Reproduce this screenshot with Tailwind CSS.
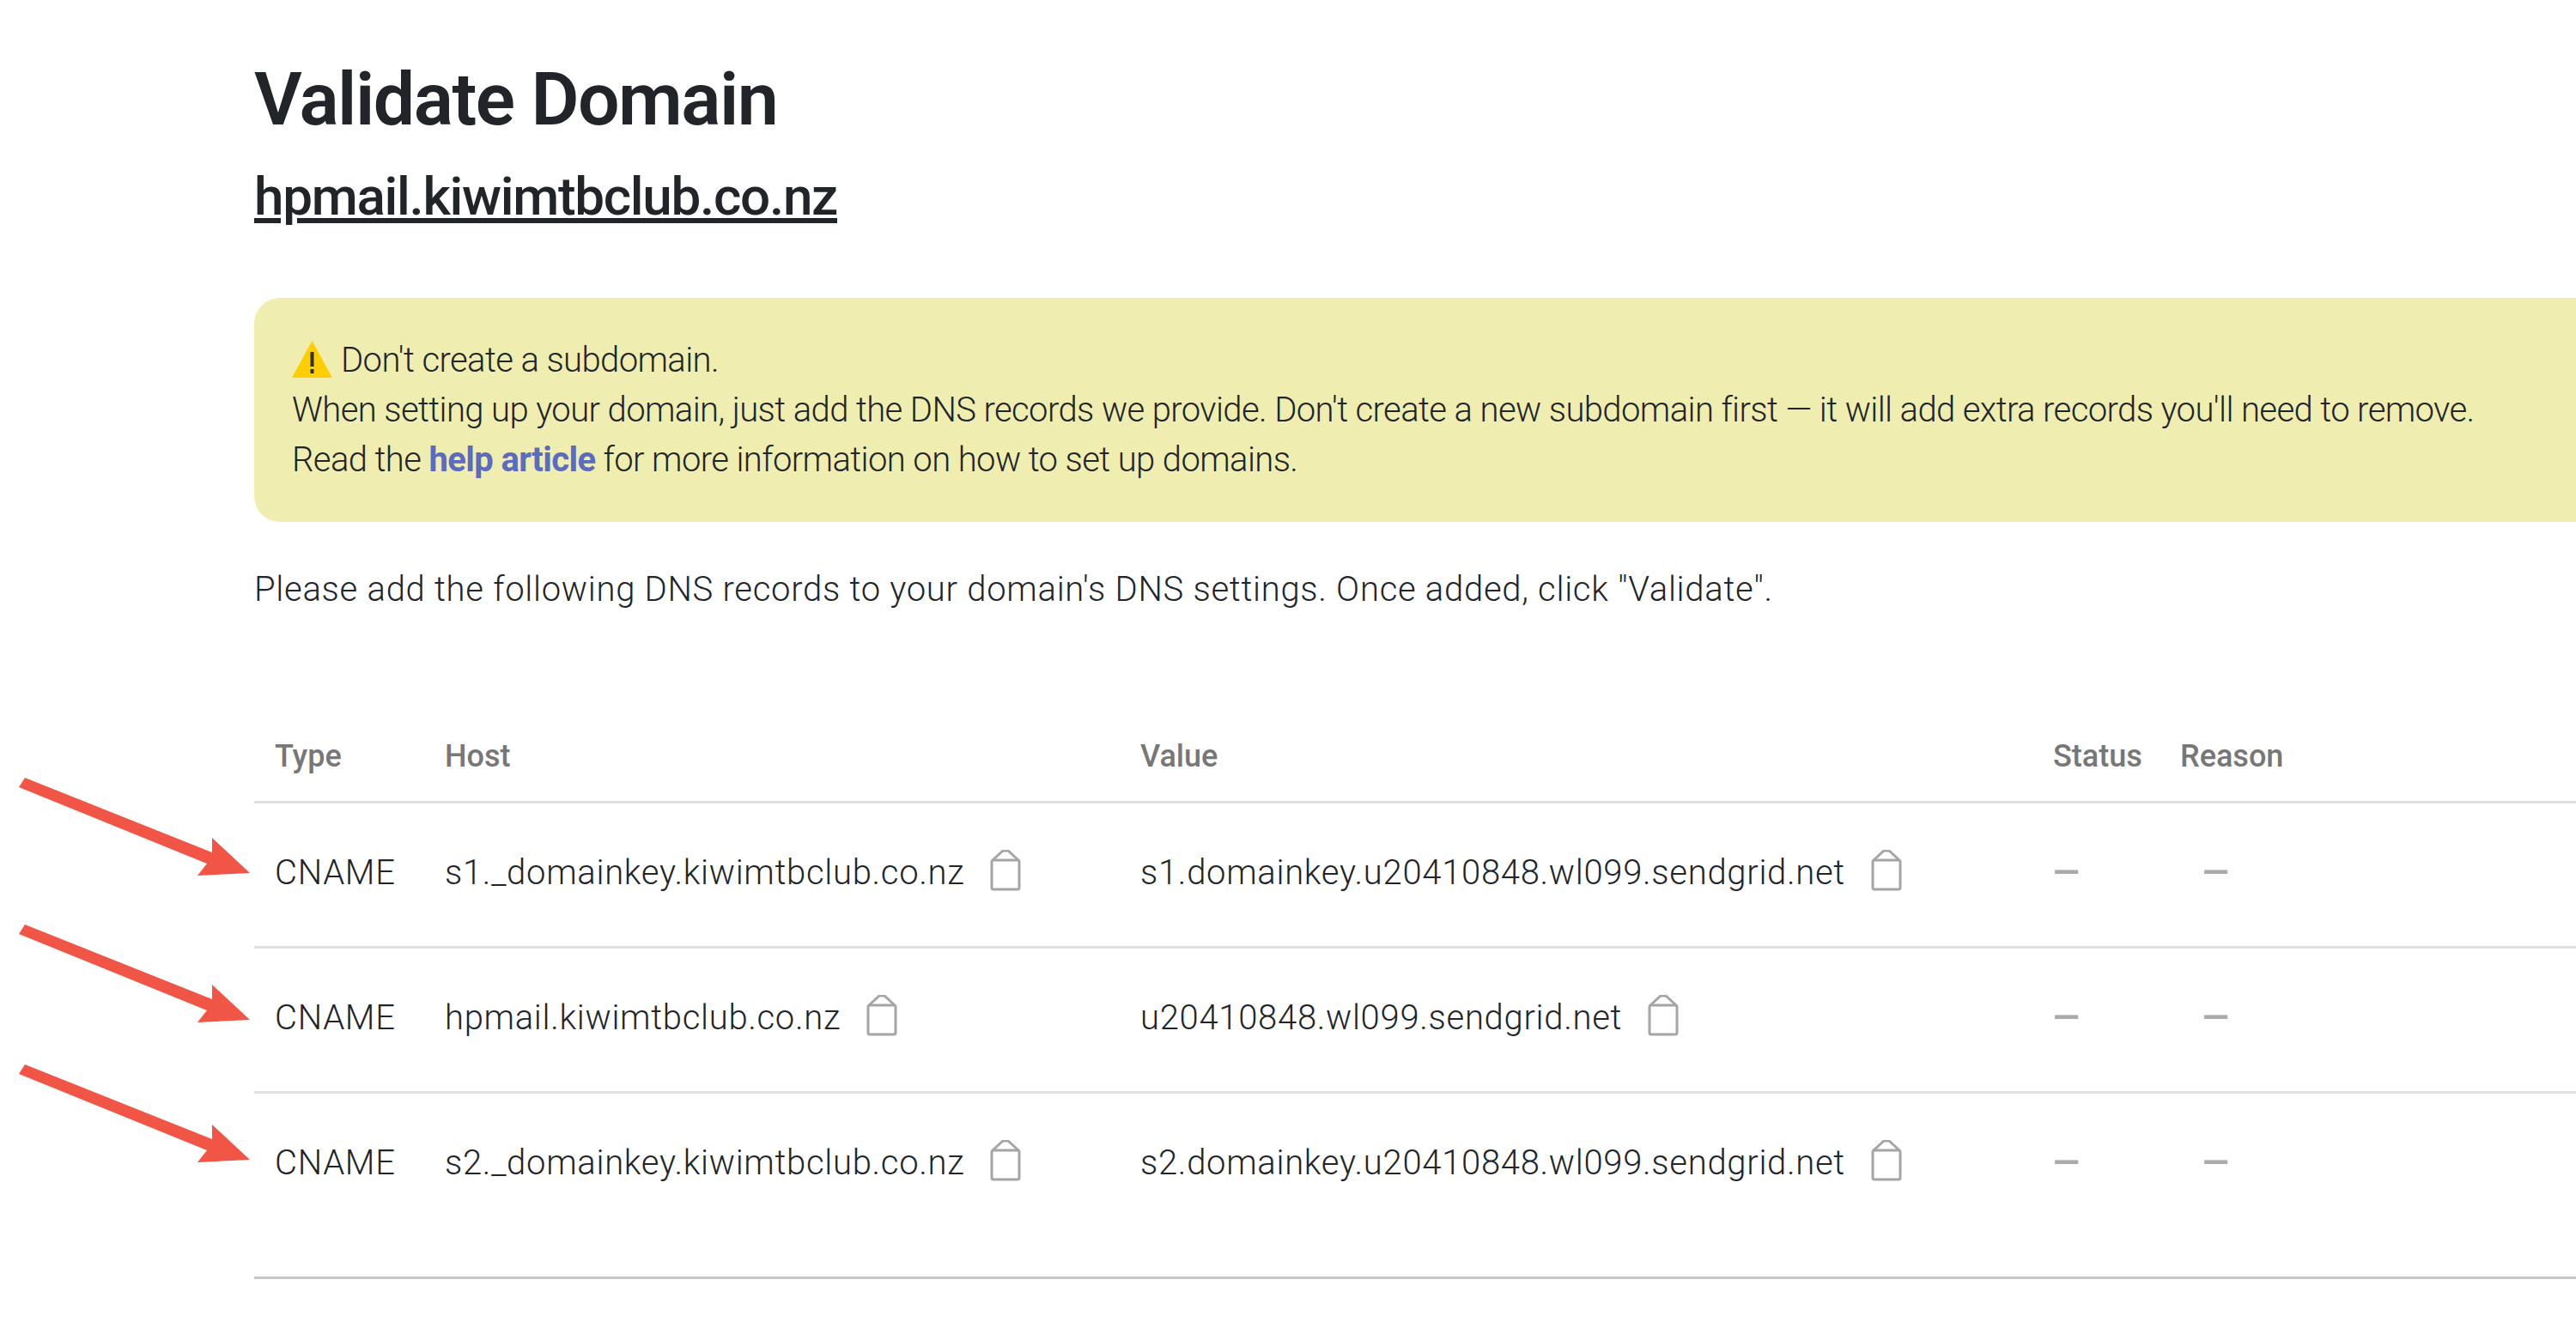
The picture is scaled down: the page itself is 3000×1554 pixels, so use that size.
<!DOCTYPE html>
<html lang="en">
<head>
  <meta charset="UTF-8" />
  <title>Validate Domain</title>
  <script src="https://cdn.jsdelivr.net/npm/@tailwindcss/browser@4"></script>
</head>
<body class="relative h-[1554px] w-[3000px] overflow-hidden bg-white font-['Roboto',sans-serif] text-[#212529]">
  <main class="pl-[296px]">
    <h1 class="pt-[66px] text-[86px] leading-[100px] font-semibold tracking-[-1.5px]">Validate Domain</h1>
    <h2 class="mt-[27px] text-[62px] leading-[72px] font-medium tracking-[-1.3px] underline">hpmail.kiwimtbclub.co.nz</h2>

    <!-- warning banner -->
    <section class="mt-[82px] h-[261px] rounded-l-[30px] bg-[#efeeb0] pt-[44px] pl-[44px] text-[40px] leading-[58px] font-light tracking-[-0.6px]">
      <div class="flex items-center gap-[10px]">
        <svg class="mt-[-3px] h-[43px] w-[47px]" viewBox="0 0 47 43"><path d="M23.5 0 47 43H0z" fill="#ffce00"/><rect x="21.5" y="13" width="4" height="17" fill="#333"/><rect x="21.5" y="33" width="4" height="5" fill="#333"/></svg>
        <span>Don't create a subdomain.</span>
      </div>
      <p>When setting up your domain, just add the DNS records we provide. Don't create a new subdomain first — it will add extra records you'll need to remove.</p>
      <p>Read the <a class="font-bold text-[#5b6bc0]">help article</a> for more information on how to set up domains.</p>
    </section>

    <p class="mt-[50px] text-[40px] leading-[58px] font-light tracking-[0.72px]">Please add the following DNS records to your domain's DNS settings. Once added, click "Validate".</p>

    <!-- records table -->
    <div class="mt-[86px]">
      <div class="grid h-[134px] grid-cols-[198px_810px_1063px_148px_1fr] items-center border-b-[3px] border-[#e0e0e0] pt-[26px] pl-[24px] text-[36px] font-medium text-[#777]">
        <span>Type</span><span>Host</span><span>Value</span><span>Status</span><span>Reason</span>
      </div>
      <div class="grid h-[169px] grid-cols-[198px_810px_1063px_148px_1fr] items-center border-b-[3px] border-[#e0e0e0] pb-[4px] pl-[24px] text-[40px] font-light tracking-[0.7px]">
        <span>CNAME</span>
        <span class="flex items-center gap-[30px]">s1._domainkey.kiwimtbclub.co.nz<svg class="mt-[-6px] h-[48px] w-[36px]" viewBox="0 0 36 48" fill="none" stroke="#a5a5a5" stroke-width="3"><path d="M3 12 15 1h6l12 11"/><rect x="2" y="12" width="32" height="34" rx="2"/></svg></span>
        <span class="flex items-center gap-[30px]">s1.domainkey.u20410848.wl099.sendgrid.net<svg class="mt-[-6px] h-[48px] w-[36px]" viewBox="0 0 36 48" fill="none" stroke="#a5a5a5" stroke-width="3"><path d="M3 12 15 1h6l12 11"/><rect x="2" y="12" width="32" height="34" rx="2"/></svg></span>
        <span class="font-bold text-[#aaa]">—</span>
        <span class="pl-[26px] font-bold text-[#aaa]">—</span>
      </div>
      <div class="grid h-[169px] grid-cols-[198px_810px_1063px_148px_1fr] items-center border-b-[3px] border-[#e0e0e0] pb-[4px] pl-[24px] text-[40px] font-light tracking-[0.7px]">
        <span>CNAME</span>
        <span class="flex items-center gap-[30px]">hpmail.kiwimtbclub.co.nz<svg class="mt-[-6px] h-[48px] w-[36px]" viewBox="0 0 36 48" fill="none" stroke="#a5a5a5" stroke-width="3"><path d="M3 12 15 1h6l12 11"/><rect x="2" y="12" width="32" height="34" rx="2"/></svg></span>
        <span class="flex items-center gap-[30px]">u20410848.wl099.sendgrid.net<svg class="mt-[-6px] h-[48px] w-[36px]" viewBox="0 0 36 48" fill="none" stroke="#a5a5a5" stroke-width="3"><path d="M3 12 15 1h6l12 11"/><rect x="2" y="12" width="32" height="34" rx="2"/></svg></span>
        <span class="font-bold text-[#aaa]">—</span>
        <span class="pl-[26px] font-bold text-[#aaa]">—</span>
      </div>
      <div class="grid h-[216px] grid-cols-[198px_810px_1063px_148px_1fr] items-start border-b-[3px] border-[#c8c8c8] pt-[57px] pl-[24px] text-[40px] leading-[48px] font-light tracking-[0.7px]">
        <span>CNAME</span>
        <span class="flex items-center gap-[30px]">s2._domainkey.kiwimtbclub.co.nz<svg class="mt-[-6px] h-[48px] w-[36px]" viewBox="0 0 36 48" fill="none" stroke="#a5a5a5" stroke-width="3"><path d="M3 12 15 1h6l12 11"/><rect x="2" y="12" width="32" height="34" rx="2"/></svg></span>
        <span class="flex items-center gap-[30px]">s2.domainkey.u20410848.wl099.sendgrid.net<svg class="mt-[-6px] h-[48px] w-[36px]" viewBox="0 0 36 48" fill="none" stroke="#a5a5a5" stroke-width="3"><path d="M3 12 15 1h6l12 11"/><rect x="2" y="12" width="32" height="34" rx="2"/></svg></span>
        <span class="font-bold text-[#aaa]">—</span>
        <span class="pl-[26px] font-bold text-[#aaa]">—</span>
      </div>
    </div>
  </main>

  <!-- annotation arrows drawn over the screenshot -->
  <svg class="absolute top-0 left-0 h-[1554px] w-[300px]" viewBox="0 0 300 1554" fill="#f15545">
    <path d="M29 906 247 993V976L291 1017 230 1020 241 1006 22 917Z"/>
    <path d="M29 1077 247 1164V1147L291 1188 230 1191 241 1177 22 1088Z"/>
    <path d="M29 1240 247 1327V1310L291 1351 230 1354 241 1340 22 1251Z"/>
  </svg>
</body>
</html>
